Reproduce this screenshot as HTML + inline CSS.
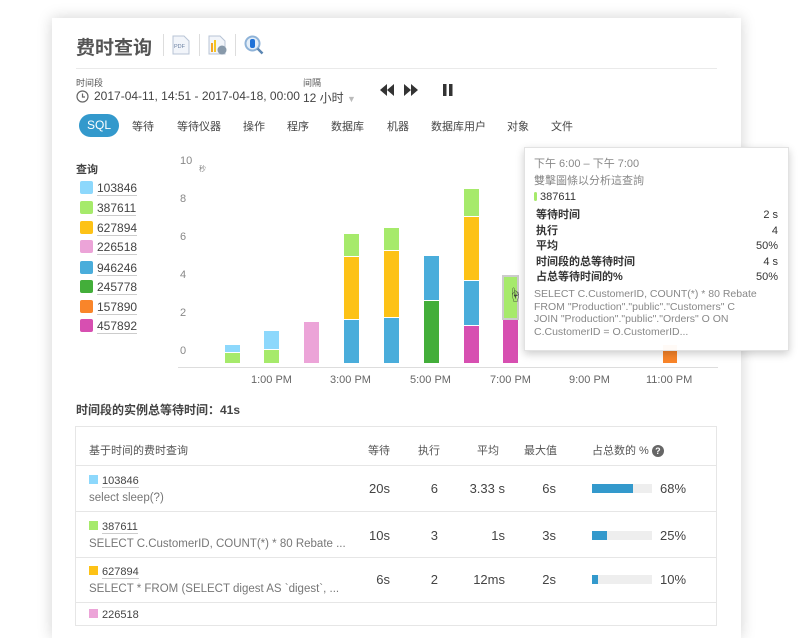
<!DOCTYPE html>
<html><head><meta charset="utf-8">
<style>
*{margin:0;padding:0;box-sizing:border-box}
body{width:811px;height:615px;overflow:hidden;background:#fff;font-family:"Liberation Sans","Noto Sans CJK SC",sans-serif;color:#333;position:relative}
.card{position:absolute;left:52px;top:18px;width:689px;height:620px;background:#fff;box-shadow:0 0 14px rgba(0,0,0,.18)}
.a{position:absolute;white-space:nowrap}
.bar{position:absolute;width:15px}
.g{background:#a6ea6b}.b{background:#4aaddb}.y{background:#fdc216}.p{background:#eca4d8}.lb{background:#8dd8fc}.dg{background:#43ae3a}.o{background:#f9852a}.m{background:#d74fb1}
.lg{position:absolute;left:80px;font-size:12px;color:#444}
.lg i{display:inline-block;width:13px;height:13px;border-radius:2px;vertical-align:-2px;margin-right:4px}
.lg span{border-bottom:1px solid #ccc}
.yl{position:absolute;left:180px;font-size:11px;color:#888}
.xl{position:absolute;top:374px;font-size:11px;color:#666}
.tab{position:absolute;top:118px;font-size:11px;color:#444}
.row{position:absolute;left:75px;width:641px;border-top:1px solid #e6e6e6}
.num{position:absolute;font-size:13px;color:#444;text-align:right}
</style></head><body>
<div class="card"></div>
<div class="a" style="left:76px;top:33px;font-size:19px;color:#555;font-weight:bold">费时查询</div>
<div class="a" style="left:163px;top:34px;width:1px;height:22px;background:#ddd"></div>
<div class="a" style="left:199px;top:34px;width:1px;height:22px;background:#ddd"></div>
<div class="a" style="left:235px;top:34px;width:1px;height:22px;background:#ddd"></div>
<svg class="a" style="left:172px;top:35px" width="18" height="20"><path d="M1 1h11l5 5v13H1z" fill="#f2f5fa" stroke="#b8c4d6"/><text x="2" y="13" font-size="5.5" fill="#6a7fa0" font-family="Liberation Sans">PDF</text></svg>
<svg class="a" style="left:208px;top:35px" width="20" height="20"><path d="M1 1h11l5 5v13H1z" fill="#f2f5fa" stroke="#b8c4d6"/><rect x="3" y="8" width="2" height="9" fill="#f5a623"/><rect x="6" y="5" width="2" height="12" fill="#f5c623"/><circle cx="14" cy="15" r="4.5" fill="#8899aa"/></svg>
<svg class="a" style="left:244px;top:35px" width="20" height="20"><circle cx="8.5" cy="8.5" r="7" fill="#e4eef8" stroke="#8fb3d8" stroke-width="2"/><rect x="6" y="4" width="5" height="9" rx="2" fill="#1f72d8"/><path d="M13.5 13.5l5 5" stroke="#5a86b3" stroke-width="2.5"/></svg>
<div class="a" style="left:76px;top:68px;width:641px;height:1px;background:#eaeaea"></div>
<div class="a" style="left:76px;top:76px;font-size:9px;color:#555">时间段</div>
<svg class="a" style="left:76px;top:90px" width="13" height="13"><circle cx="6.5" cy="6.5" r="5.5" fill="none" stroke="#666" stroke-width="1.2"/><path d="M6.5 3.5v3.5h2.5" fill="none" stroke="#666" stroke-width="1.2"/></svg>
<div class="a" style="left:94px;top:89px;font-size:12px;color:#444">2017-04-11, 14:51 - 2017-04-18, 00:00</div>
<div class="a" style="left:303px;top:76px;font-size:9px;color:#555">间隔</div>
<div class="a" style="left:303px;top:89px;font-size:12px;color:#444">12 小时 <span style="color:#bbb;font-size:9px">▼</span></div>
<svg class="a" style="left:379px;top:83px" width="80" height="14"><path d="M1 7l7-6v12zM8 7l7-6v12z" fill="#333"/><path d="M25 1l7 6-7 6zM32 1l7 6-7 6z" fill="#333"/><rect x="64" y="1" width="3.5" height="12" fill="#333"/><rect x="70" y="1" width="3.5" height="12" fill="#333"/></svg>
<div class="a" style="left:79px;top:114px;width:40px;height:23px;border-radius:12px;background:#3399cc;color:#fff;font-size:12px;text-align:center;line-height:23px">SQL</div>
<div class="tab" style="left:132px">等待</div><div class="tab" style="left:177px">等待仪器</div><div class="tab" style="left:243px">操作</div><div class="tab" style="left:287px">程序</div><div class="tab" style="left:331px">数据库</div><div class="tab" style="left:387px">机器</div><div class="tab" style="left:431px">数据库用户</div><div class="tab" style="left:507px">对象</div><div class="tab" style="left:551px">文件</div>
<div class="a" style="left:76px;top:161px;font-size:11px;font-weight:bold;color:#444">查询</div>
<div class="lg" style="top:181px"><i class="lb"></i><span>103846</span></div>
<div class="lg" style="top:201px"><i class="g"></i><span>387611</span></div>
<div class="lg" style="top:221px"><i class="y"></i><span>627894</span></div>
<div class="lg" style="top:240px"><i class="p"></i><span>226518</span></div>
<div class="lg" style="top:261px"><i class="b"></i><span>946246</span></div>
<div class="lg" style="top:280px"><i class="dg"></i><span>245778</span></div>
<div class="lg" style="top:300px"><i class="o"></i><span>157890</span></div>
<div class="lg" style="top:319px"><i class="m"></i><span>457892</span></div>
<div class="yl" style="top:155px">10</div><div class="yl" style="left:199px;top:164px;font-size:7px">秒</div>
<div class="yl" style="top:193px">8</div><div class="yl" style="top:231px">6</div><div class="yl" style="top:269px">4</div><div class="yl" style="top:307px">2</div><div class="yl" style="top:345px">0</div>
<div class="a" style="left:178px;top:367px;width:540px;height:1px;background:#ddd"></div>
<div class="bar lb" style="left:225px;top:345px;height:7px"></div><div class="bar g" style="left:225px;top:353px;height:10px"></div>
<div class="bar lb" style="left:264px;top:331px;height:18px"></div><div class="bar g" style="left:264px;top:350px;height:13px"></div>
<div class="bar p" style="left:304px;top:322px;height:41px"></div>
<div class="bar g" style="left:344px;top:234px;height:22px"></div><div class="bar y" style="left:344px;top:257px;height:62px"></div><div class="bar b" style="left:344px;top:320px;height:43px"></div>
<div class="bar g" style="left:384px;top:228px;height:22px"></div><div class="bar y" style="left:384px;top:251px;height:66px"></div><div class="bar b" style="left:384px;top:318px;height:45px"></div>
<div class="bar b" style="left:424px;top:256px;height:44px"></div><div class="bar dg" style="left:424px;top:301px;height:62px"></div>
<div class="bar g" style="left:464px;top:189px;height:27px"></div><div class="bar y" style="left:464px;top:217px;height:63px"></div><div class="bar b" style="left:464px;top:281px;height:44px"></div><div class="bar m" style="left:464px;top:326px;height:37px"></div>
<div class="bar g" style="left:502px;top:275px;width:17px;height:45px;border:2px solid #ccc"></div><div class="bar m" style="left:503px;top:320px;height:43px"></div>
<div class="a" style="left:508px;top:285px;font-size:14px">☝</div>
<div class="bar o" style="left:663px;top:345px;height:18px;width:14px"></div>
<div class="xl" style="left:251px">1:00 PM</div><div class="xl" style="left:330px">3:00 PM</div><div class="xl" style="left:410px">5:00 PM</div><div class="xl" style="left:490px">7:00 PM</div><div class="xl" style="left:569px">9:00 PM</div><div class="xl" style="left:646px">11:00 PM</div>
<div class="a" style="left:524px;top:147px;width:265px;height:204px;background:rgba(255,255,255,.96);border:1px solid #e2e2e2;box-shadow:0 3px 8px rgba(0,0,0,.2);font-size:11px;color:#888">
<div class="a" style="left:9px;top:7px">下午 6:00 – 下午 7:00</div>
<div class="a" style="left:9px;top:24px">雙擊圖條以分析這查詢</div>
<div class="a" style="left:9px;top:43px;color:#333"><span style="display:inline-block;width:3px;height:9px;background:#a6ea6b;border-radius:2px;vertical-align:-1px"></span> 387611</div>
<div class="a" style="left:11px;top:60px;width:242px;color:#333;font-weight:bold;line-height:15.5px">
<div style="display:flex;justify-content:space-between"><span>等待时间</span><span style="font-weight:normal">2 s</span></div>
<div style="display:flex;justify-content:space-between"><span>执行</span><span style="font-weight:normal">4</span></div>
<div style="display:flex;justify-content:space-between"><span>平均</span><span style="font-weight:normal">50%</span></div>
<div style="display:flex;justify-content:space-between"><span>时间段的总等待时间</span><span style="font-weight:normal">4 s</span></div>
<div style="display:flex;justify-content:space-between"><span>占总等待时间的%</span><span style="font-weight:normal">50%</span></div></div>
<div class="a" style="left:9px;top:140px;line-height:12.5px;font-size:10.5px">SELECT C.CustomerID, COUNT(*) * 80 Rebate<br>FROM "Production"."public"."Customers" C<br>JOIN "Production"."public"."Orders" O ON<br>C.CustomerID = O.CustomerID...</div>
</div>
<div class="a" style="left:76px;top:401px;font-size:12px;font-weight:bold;color:#444">时间段的实例总等待时间：41s</div>
<div class="a" style="left:75px;top:426px;width:642px;height:200px;border:1px solid #e6e6e6"></div>
<div class="a" style="left:89px;top:442px;font-size:11px;color:#555">基于时间的费时查询</div>
<div class="a" style="left:368px;top:442px;font-size:11px;color:#555">等待</div>
<div class="a" style="left:418px;top:442px;font-size:11px;color:#555">执行</div>
<div class="a" style="left:477px;top:442px;font-size:11px;color:#555">平均</div>
<div class="a" style="left:524px;top:442px;font-size:11px;color:#555">最大值</div>
<div class="a" style="left:592px;top:442px;font-size:11px;color:#555">占总数的 % <span style="display:inline-block;width:12px;height:12px;border-radius:6px;background:#666;color:#fff;font-size:9px;text-align:center;line-height:12px;font-weight:bold">?</span></div>
<div class="row" style="top:465px;height:46px">
<div class="a" style="left:14px;top:9px;font-size:11px;color:#444"><i class="lb" style="display:inline-block;width:9px;height:9px;margin-right:4px"></i><span style="border-bottom:1px solid #ccc">103846</span></div>
<div class="a" style="left:14px;top:26px;font-size:11.5px;color:#777">select sleep(?)</div></div>
<div class="row" style="top:511px;height:46px">
<div class="a" style="left:14px;top:9px;font-size:11px;color:#444"><i class="g" style="display:inline-block;width:9px;height:9px;margin-right:4px"></i><span style="border-bottom:1px solid #ccc">387611</span></div>
<div class="a" style="left:14px;top:26px;font-size:11.5px;color:#777">SELECT C.CustomerID, COUNT(*) * 80 Rebate ...</div></div>
<div class="row" style="top:557px;height:46px">
<div class="a" style="left:14px;top:8px;font-size:11px;color:#444"><i class="y" style="display:inline-block;width:9px;height:9px;margin-right:4px"></i><span style="border-bottom:1px solid #ccc">627894</span></div>
<div class="a" style="left:14px;top:25px;font-size:11.5px;color:#777">SELECT * FROM (SELECT digest AS `digest`, ...</div></div>
<div class="row" style="top:602px;height:20px">
<div class="a" style="left:14px;top:6px;font-size:11px;color:#444"><i class="p" style="display:inline-block;width:9px;height:9px;margin-right:4px"></i>226518</div></div>
<div class="num" style="left:340px;top:481px;width:50px">20s</div><div class="num" style="left:400px;top:481px;width:38px">6</div><div class="num" style="left:450px;top:481px;width:55px">3.33 s</div><div class="num" style="left:510px;top:481px;width:46px">6s</div>
<div class="a" style="left:592px;top:484px;width:60px;height:9px;background:#eee"><div style="width:41px;height:9px;background:#3399cc"></div></div><div class="num" style="left:660px;top:481px">68%</div>
<div class="num" style="left:340px;top:528px;width:50px">10s</div><div class="num" style="left:400px;top:528px;width:38px">3</div><div class="num" style="left:450px;top:528px;width:55px">1s</div><div class="num" style="left:510px;top:528px;width:46px">3s</div>
<div class="a" style="left:592px;top:531px;width:60px;height:9px;background:#eee"><div style="width:15px;height:9px;background:#3399cc"></div></div><div class="num" style="left:660px;top:528px">25%</div>
<div class="num" style="left:340px;top:572px;width:50px">6s</div><div class="num" style="left:400px;top:572px;width:38px">2</div><div class="num" style="left:450px;top:572px;width:55px">12ms</div><div class="num" style="left:510px;top:572px;width:46px">2s</div>
<div class="a" style="left:592px;top:575px;width:60px;height:9px;background:#eee"><div style="width:6px;height:9px;background:#3399cc"></div></div><div class="num" style="left:660px;top:572px">10%</div>
</body></html>
